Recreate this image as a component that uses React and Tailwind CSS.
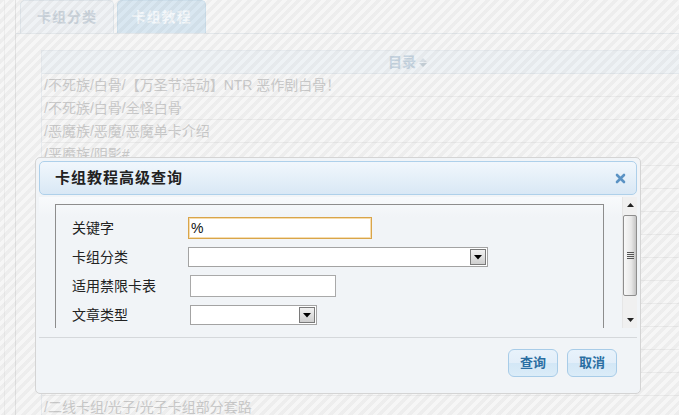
import React from "react";

const rows = [
  "/不死族/白骨/【万圣节活动】NTR 恶作剧白骨！",
  "/不死族/白骨/全怪白骨",
  "/恶魔族/恶魔/恶魔单卡介绍",
  "/恶魔族/阴影#",
  "",
  "",
  "",
  "",
  "",
  "",
  "",
  "",
  "",
  "",
  "/二线卡组/光子/光子卡组部分套路",
];

function SelectBox({ w }) {
  return (
    <div className={`${w} h-[20px] bg-white border border-[#a3a3a3] flex justify-end items-stretch p-[1px]`}>
      <div className="w-[16px] border border-[#7a7a7a] bg-[linear-gradient(to_bottom,#f2f2f2,#cfcfcf)] flex items-center justify-center">
        <svg width="8" height="5" viewBox="0 0 8 5"><path d="M0 0h8L4 4.5z" fill="#000" /></svg>
      </div>
    </div>
  );
}

export default function App() {
  return (
    <div className="relative w-[679px] h-[415px] overflow-hidden bg-[#f6f6f6] font-[family-name:'Liberation_Sans','Noto_Sans_CJK_SC',sans-serif]">
      {/* underlying page */}
      <div className="h-full ml-[4px] border-l border-[#ececec] pl-[10px]">
        <div className="h-full border-l border-[#e2e2e2] flex flex-col">
          <div className="h-[34px] flex items-end gap-[3px] pl-[4px] border-b border-[#e3e7ea]">
            <div className="w-[94px] h-[33px] rounded-t-[5px] border border-b-0 border-[#e0e6eb] bg-[#eff2f5] flex items-center justify-center text-[14px] font-bold tracking-[1px] text-[#ccd4dc]">卡组分类</div>
            <div className="w-[89px] h-[33px] rounded-t-[5px] border border-b-0 border-[#cddfeb] bg-[#d9e7f1] flex items-center justify-center text-[14px] font-bold tracking-[1px] text-[#f4f8fb]">卡组教程</div>
          </div>
          <div className="ml-[25px] mt-[16px] border-l border-t border-[#e6eaee]">
            <div className="h-[23px] bg-[#eef2f5] border-b border-[#e3e8ec] flex items-center pl-[346px] gap-[2px]">
              <span className="text-[14px] font-bold text-[#c6d4e0]">目录</span>
              <span className="flex flex-col gap-[1px] ml-[1px]">
                <svg width="8" height="4" viewBox="0 0 8 4"><path d="M0 4h8L4 0z" fill="#d6dde3" /></svg>
                <svg width="8" height="4" viewBox="0 0 8 4"><path d="M0 0h8L4 4z" fill="#c8d2da" /></svg>
              </span>
            </div>
            {rows.map((r, i) => (
              <div key={i} className="h-[23px] border-b border-[#eaeaea] flex items-center pl-[2px] text-[14px] text-[#cbcbcb] whitespace-nowrap">{r}</div>
            ))}
          </div>
        </div>
      </div>

      {/* overlay */}
      <div className="absolute inset-0 bg-[repeating-linear-gradient(135deg,rgba(0,0,0,0.035)_0px,rgba(0,0,0,0.035)_3.5px,transparent_3.5px,transparent_7px)]" />

      {/* dialog */}
      <div className="absolute left-[35px] top-[157px] w-[606px] h-[237px] overflow-hidden border border-[#d4d4d4] rounded-[5px] bg-[#f1f4f7] p-[3px] flex flex-col">
        <div className="h-[34px] shrink-0 rounded-[5px] border border-[#aed0ea] bg-[linear-gradient(to_bottom,#f1f7fc,#d9e8f5)] flex items-center justify-between pl-[15px] pr-[10px]">
          <span className="text-[15px] font-bold tracking-[1px] text-[#222]">卡组教程高级查询</span>
          <svg width="11" height="11" viewBox="0 0 11 11">
            <path d="M2 2L9 9M9 2L2 9" stroke="#5b93c4" strokeWidth="2.6" strokeLinecap="round" />
          </svg>
        </div>

        <div className="mt-[2px] h-[131px] shrink-0 flex bg-[linear-gradient(to_bottom,#f8fafc,#f1f4f7_20px)]">
          <div className="flex-1 overflow-hidden pl-[16px] pt-[7px]">
            <div className="w-[549px] h-[200px] border-t border-l border-r border-[#8d8d8d] pt-[12px] pl-[16px] flex flex-col gap-[8px] text-[14px] text-[#222]">
              <div className="flex items-center h-[22px]">
                <span className="w-[116px]">关键字</span>
                <div className="w-[184px] h-[22px] bg-white border border-[#d9a54a] shadow-[inset_0_0_0_1px_#f6ddb0] flex items-center pl-[2px] text-[14px] text-[#111]">%</div>
              </div>
              <div className="flex items-center h-[20px]">
                <span className="w-[116px]">卡组分类</span>
                <SelectBox w="w-[300px]" />
              </div>
              <div className="flex items-center h-[22px]">
                <span className="w-[118px]">适用禁限卡表</span>
                <div className="w-[146px] h-[22px] bg-white border border-[#a9a9a9]" />
              </div>
              <div className="flex items-center h-[20px]">
                <span className="w-[118px]">文章类型</span>
                <SelectBox w="w-[127px]" />
              </div>
            </div>
          </div>
          <div className="w-[15px] bg-[#f0f0f0] border-l border-[#e6e6e6] flex flex-col">
            <div className="h-[16px] flex items-center justify-center">
              <svg width="7" height="4" viewBox="0 0 7 4"><path d="M0 4h7L3.5 0z" fill="#222" /></svg>
            </div>
            <div className="mt-[2px] h-[81px] rounded-[2px] border border-[#8e8e8e] bg-[linear-gradient(to_right,#f8f8f8,#e8e8e8_60%,#c4c4c4)] flex flex-col items-center justify-center gap-[1px]">
              <div className="w-[7px] h-[1px] bg-[#555]" />
              <div className="w-[7px] h-[1px] bg-[#555]" />
              <div className="w-[7px] h-[1px] bg-[#555]" />
              <div className="w-[7px] h-[1px] bg-[#555]" />
            </div>
            <div className="flex-1" />
            <div className="h-[16px] flex items-center justify-center">
              <svg width="7" height="4" viewBox="0 0 7 4"><path d="M0 0h7L3.5 4z" fill="#222" /></svg>
            </div>
          </div>
        </div>

        <div className="mt-[9px] border-t border-[#d5d8db] flex justify-end gap-[9px] pt-[11px] pr-[20px]">
          <button className="w-[50px] h-[28px] rounded-[6px] border border-[#a8cce8] bg-[linear-gradient(to_bottom,#e8f2fb,#e2eef9_50%,#d3e7f6_50%,#dbecf8)] text-[13px] font-bold text-[#2a6ea2]">查询</button>
          <button className="w-[50px] h-[28px] rounded-[6px] border border-[#a8cce8] bg-[linear-gradient(to_bottom,#e8f2fb,#e2eef9_50%,#d3e7f6_50%,#dbecf8)] text-[13px] font-bold text-[#2a6ea2]">取消</button>
        </div>
      </div>
    </div>
  );
}
